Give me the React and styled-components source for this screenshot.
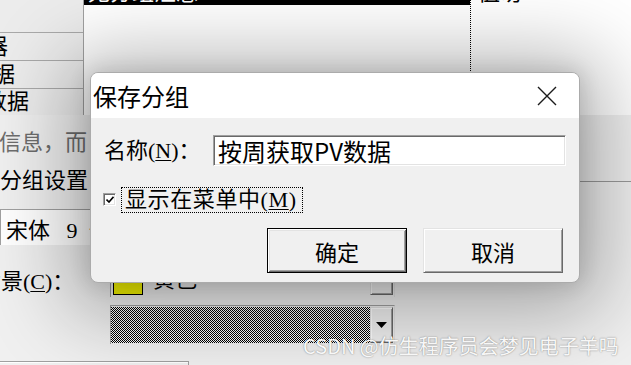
import React from 'react';
import styled, { createGlobalStyle } from 'styled-components';

const SERIF = `"Liberation Serif", "Noto Sans CJK SC", serif`;
const SANS = `"Noto Sans CJK SC", "Liberation Sans", sans-serif`;

const Global = createGlobalStyle`
  html, body { margin: 0; padding: 0; background: #f0f0f0; }
  body { width: 631px; height: 365px; overflow: hidden; }
  * { box-sizing: border-box; }
`;

const Screen = styled.div`
  position: relative;
  width: 631px;
  height: 365px;
  overflow: hidden;
  background: #f0f0f0;
  font-family: ${SERIF};
  color: #000;
`;

/* ---------- background window ---------- */
const TopArea = styled.div`
  display: grid;
  grid-template-columns: 84px 386px 1fr;
  height: 115px;
`;

const SideColumn = styled.div`
  display: flex;
  flex-direction: column;
  background: #ececec;
  border-right: 1px solid #a0a0a0;
`;

const SideRow = styled.div`
  height: ${(p) => p.$h}px;
  flex: ${(p) => (p.$grow ? 1 : 'none')};
  border-bottom: ${(p) => (p.$last ? 'none' : '1px solid #a9a9a9')};
  display: flex;
  align-items: center;
  overflow: hidden;
  white-space: nowrap;
  font-size: 22px;
  line-height: 24px;
`;

const SideText = styled.span`
  margin-left: ${(p) => p.$shift}px;
`;

const ListColumn = styled.div`
  background: #fff;
`;

const SelectedBar = styled.div`
  height: 5px;
  background: #000;
  overflow: hidden;
  color: #fff;
  font-size: 22px;
  line-height: 24px;
  padding-left: 4px;
  white-space: nowrap;
`;

const CutText = styled.div`
  margin-top: -19px;
`;

const ValueColumn = styled.div`
  background: #fff;
  border-left: 1px dotted #000;
  overflow: hidden;
  font-size: 22px;
  line-height: 24px;
  padding-left: 7px;
  white-space: nowrap;
`;

const LowerArea = styled.div`
  display: flex;
  flex-direction: column;
  height: 250px;
  background: #f0f0f0;
`;

const InfoText = styled.div`
  margin-top: 16px;
  margin-left: -1px;
  font-size: 22px;
  line-height: 24px;
  color: #6d6d6d;
  white-space: pre;
`;

const GroupHeader = styled.div`
  display: flex;
  align-items: center;
  margin-top: 14px;
  height: 24px;
`;

const GroupCaption = styled.span`
  font-size: 22px;
  line-height: 24px;
  padding-right: 8px;
  white-space: nowrap;
`;

const GroupLine = styled.div`
  flex: 1;
  height: 1px;
  margin-top: 1px;
  background: #9a9a9a;
`;

const FontCombo = styled.div`
  margin-top: 16px;
  width: 340px;
  height: 36px;
  border-style: solid;
  border-width: 1px 0 0 1px;
  border-color: #a0a0a0;
  background: #fff;
  display: flex;
  align-items: center;
  padding-left: 5px;
  font-size: 22px;
  white-space: pre;
`;

const ColorRow = styled.div`
  display: flex;
  margin-top: 10px;
`;

const RowLabel = styled.div`
  width: 110px;
  margin-top: 15px;
  font-size: 22px;
  line-height: 24px;
  white-space: nowrap;
  overflow: hidden;
`;

const LabelInner = styled.span`
  display: inline-block;
  margin-left: -21px;
`;

const ComboStack = styled.div`
  display: flex;
  flex-direction: column;
  gap: 8px;
  width: 285px;
`;

const Combo = styled.div`
  display: flex;
  align-items: stretch;
  height: ${(p) => p.$h}px;
  border-style: solid;
  border-width: 1px 1px 0 1px;
  border-color: #a0a0a0 #e3e3e3 #e3e3e3 #a0a0a0;
  background: #f0f0f0;
  padding: ${(p) => p.$pad};
`;

const Swatch = styled.div`
  width: 30px;
  background: #f6f600;
  border: 1px solid #000;
`;

const ColorName = styled.div`
  flex: 1;
  display: flex;
  align-items: center;
  padding-left: 10px;
  font-size: 22px;
`;

const Dither = styled.svg`
  flex: 1;
  display: block;
  height: 100%;
`;

const DropButton = styled.div`
  width: 23px;
  display: flex;
  align-items: center;
  justify-content: center;
  background: #f0f0f0;
  border-style: solid;
  border-width: 1px;
  border-color: #e3e3e3 #696969 #696969 #e3e3e3;
  box-shadow: inset 1px 1px #fff, inset -1px -1px #a0a0a0;
`;

const BottomBox = styled.div`
  margin-top: 17px;
  width: 189px;
  flex: 1;
  border-top: 1px solid #a0a0a0;
  border-right: 1px solid #a0a0a0;
  box-shadow: inset 0 1px #fff;
`;

/* ---------- dialog ---------- */
const Dialog = styled.div`
  position: absolute;
  left: 90px;
  top: 72px;
  width: 490px;
  height: 211px;
  border: 1px solid #ababab;
  border-radius: 8px;
  overflow: hidden;
  background: #f0f0f0;
  display: flex;
  flex-direction: column;
  box-shadow: 0 0 20px 2px rgba(0, 0, 0, 0.12), 0 8px 80px 24px rgba(0, 0, 0, 0.3);
`;

const TitleBar = styled.div`
  height: 45px;
  flex: none;
  background: #fff;
  display: flex;
  align-items: center;
  justify-content: space-between;
  padding: 0 22px 0 2px;
`;

const Title = styled.div`
  font-family: ${SANS};
  font-size: 24px;
  line-height: 1;
  color: #000;
`;

const CloseIcon = styled.svg`
  width: 20px;
  height: 20px;
  display: block;
`;

const Body = styled.div`
  flex: 1;
  display: flex;
  flex-direction: column;
  padding: 17px 13px 0 13px;
`;

const NameRow = styled.div`
  display: flex;
  align-items: center;
  height: 31px;
`;

const FieldLabel = styled.label`
  width: 109px;
  font-size: 22px;
  line-height: 1;
  white-space: nowrap;
`;

const Accel = styled.span`
  text-decoration: underline;
  text-underline-offset: 2px;
  text-decoration-thickness: 1px;
`;

const TextInput = styled.input`
  width: 353px;
  height: 31px;
  padding: 0 0 0 4px;
  margin: 0;
  border-style: solid;
  border-width: 1px;
  border-color: #a0a0a0 #fff #fff #a0a0a0;
  box-shadow: inset 1px 1px #696969, inset -1px -1px #e3e3e3;
  background: #fff;
  font-family: ${SANS};
  font-size: 24px;
  color: #000;
  outline: none;
`;

const CheckRow = styled.div`
  display: flex;
  align-items: center;
  margin-top: 21px;
  height: 26px;
`;

const CheckBox = styled.span`
  width: 13px;
  height: 13px;
  margin-left: -1px;
  margin-right: 5px;
  margin-top: -1px;
  display: flex;
  align-items: center;
  justify-content: center;
  background: #fff;
  border-style: solid;
  border-width: 1px;
  border-color: #a0a0a0 #fff #fff #a0a0a0;
  box-shadow: inset 1px 1px #696969, inset -1px -1px #e3e3e3;
`;

const FocusLabel = styled.span`
  height: 26px;
  display: flex;
  align-items: center;
  border: 1px dotted #000;
  padding: 0 5px 0 3px;
  font-size: 22px;
  line-height: 1;
  white-space: nowrap;
  letter-spacing: 0.6px;
`;

const ButtonRow = styled.div`
  display: flex;
  justify-content: flex-end;
  gap: 16px;
  margin-top: 15px;
  padding-right: 3px;
`;

const Button = styled.button`
  width: 140px;
  height: 45px;
  margin: 0;
  padding: 0;
  background: #f0f0f0;
  font-family: ${SERIF};
  font-size: 22px;
  color: #000;
  border-style: solid;
  border-width: 1px;
  border-color: ${(p) => (p.$default ? '#000' : '#e3e3e3 #696969 #696969 #e3e3e3')};
  box-shadow: ${(p) =>
    p.$default
      ? 'inset 1px 1px #fff, inset -1px -1px #696969, inset 2px 2px #e3e3e3, inset -2px -2px #a0a0a0'
      : 'inset 1px 1px #fff, inset -1px -1px #a0a0a0'};
`;

const Watermark = styled.div`
  position: absolute;
  left: 303px;
  top: 334px;
  font-family: ${SANS};
  font-size: 20px;
  line-height: 24px;
  color: #f7f7f7;
  text-shadow: 0 0 1.5px rgba(0, 0, 0, 0.5);
  white-space: nowrap;
  pointer-events: none;
`;

export default function App() {
  return (
    <Screen>
      <Global />
      <TopArea>
        <SideColumn>
          <SideRow $h={33}></SideRow>
          <SideRow $h={28}>
            <SideText $shift={-14}>器</SideText>
          </SideRow>
          <SideRow $h={28}>
            <SideText $shift={-7}>据</SideText>
          </SideRow>
          <SideRow $grow $last>
            <SideText $shift={-15}>数据</SideText>
          </SideRow>
        </SideColumn>
        <ListColumn>
          <SelectedBar>
            <CutText>无分组汇总</CutText>
          </SelectedBar>
        </ListColumn>
        <ValueColumn>
          <CutText>值勿</CutText>
        </ValueColumn>
      </TopArea>
      <LowerArea>
        <InfoText>{'信息，而   是按分组汇总显示数据'}</InfoText>
        <GroupHeader>
          <GroupCaption>分组设置</GroupCaption>
          <GroupLine />
        </GroupHeader>
        <FontCombo>{'宋体   9  号'}</FontCombo>
        <ColorRow>
          <RowLabel>
            <LabelInner>
              背景(<Accel>C</Accel>)：
            </LabelInner>
          </RowLabel>
          <ComboStack>
            <Combo $h={42} $pad="3px 1px 2px 2px">
              <Swatch />
              <ColorName>黄色</ColorName>
              <DropButton />
            </Combo>
            <Combo $h={39} $pad="1px 1px 1px 0">
              <Dither shapeRendering="crispEdges" preserveAspectRatio="none">
                <defs>
                  <pattern id="dither" width="2" height="2" patternUnits="userSpaceOnUse">
                    <rect width="2" height="2" fill="#fff" />
                    <rect width="1" height="1" fill="#000" />
                    <rect x="1" y="1" width="1" height="1" fill="#000" />
                  </pattern>
                </defs>
                <rect width="100%" height="100%" fill="url(#dither)" />
              </Dither>
              <DropButton>
                <svg width="11" height="6" viewBox="0 0 11 6">
                  <path d="M0 0 H11 L5.5 6 Z" fill="#000" />
                </svg>
              </DropButton>
            </Combo>
          </ComboStack>
        </ColorRow>
        <BottomBox />
      </LowerArea>

      <Dialog>
        <TitleBar>
          <Title>保存分组</Title>
          <CloseIcon viewBox="0 0 20 20">
            <path d="M1 1 L19 19 M19 1 L1 19" stroke="#1b1b1b" strokeWidth="1.4" fill="none" />
          </CloseIcon>
        </TitleBar>
        <Body>
          <NameRow>
            <FieldLabel>
              名称(<Accel>N</Accel>)：
            </FieldLabel>
            <TextInput readOnly defaultValue="按周获取PV数据" />
          </NameRow>
          <CheckRow>
            <CheckBox>
              <svg width="8" height="7" viewBox="0 0 8 7">
                <path d="M0.5 3.5 L3 6 L7.5 0.8" stroke="#000" strokeWidth="1.6" fill="none" />
              </svg>
            </CheckBox>
            <FocusLabel>
              显示在菜单中(<Accel>M</Accel>)
            </FocusLabel>
          </CheckRow>
          <ButtonRow>
            <Button $default>确定</Button>
            <Button>取消</Button>
          </ButtonRow>
        </Body>
      </Dialog>

      <Watermark>CSDN @仿生程序员会梦见电子羊吗</Watermark>
    </Screen>
  );
}
